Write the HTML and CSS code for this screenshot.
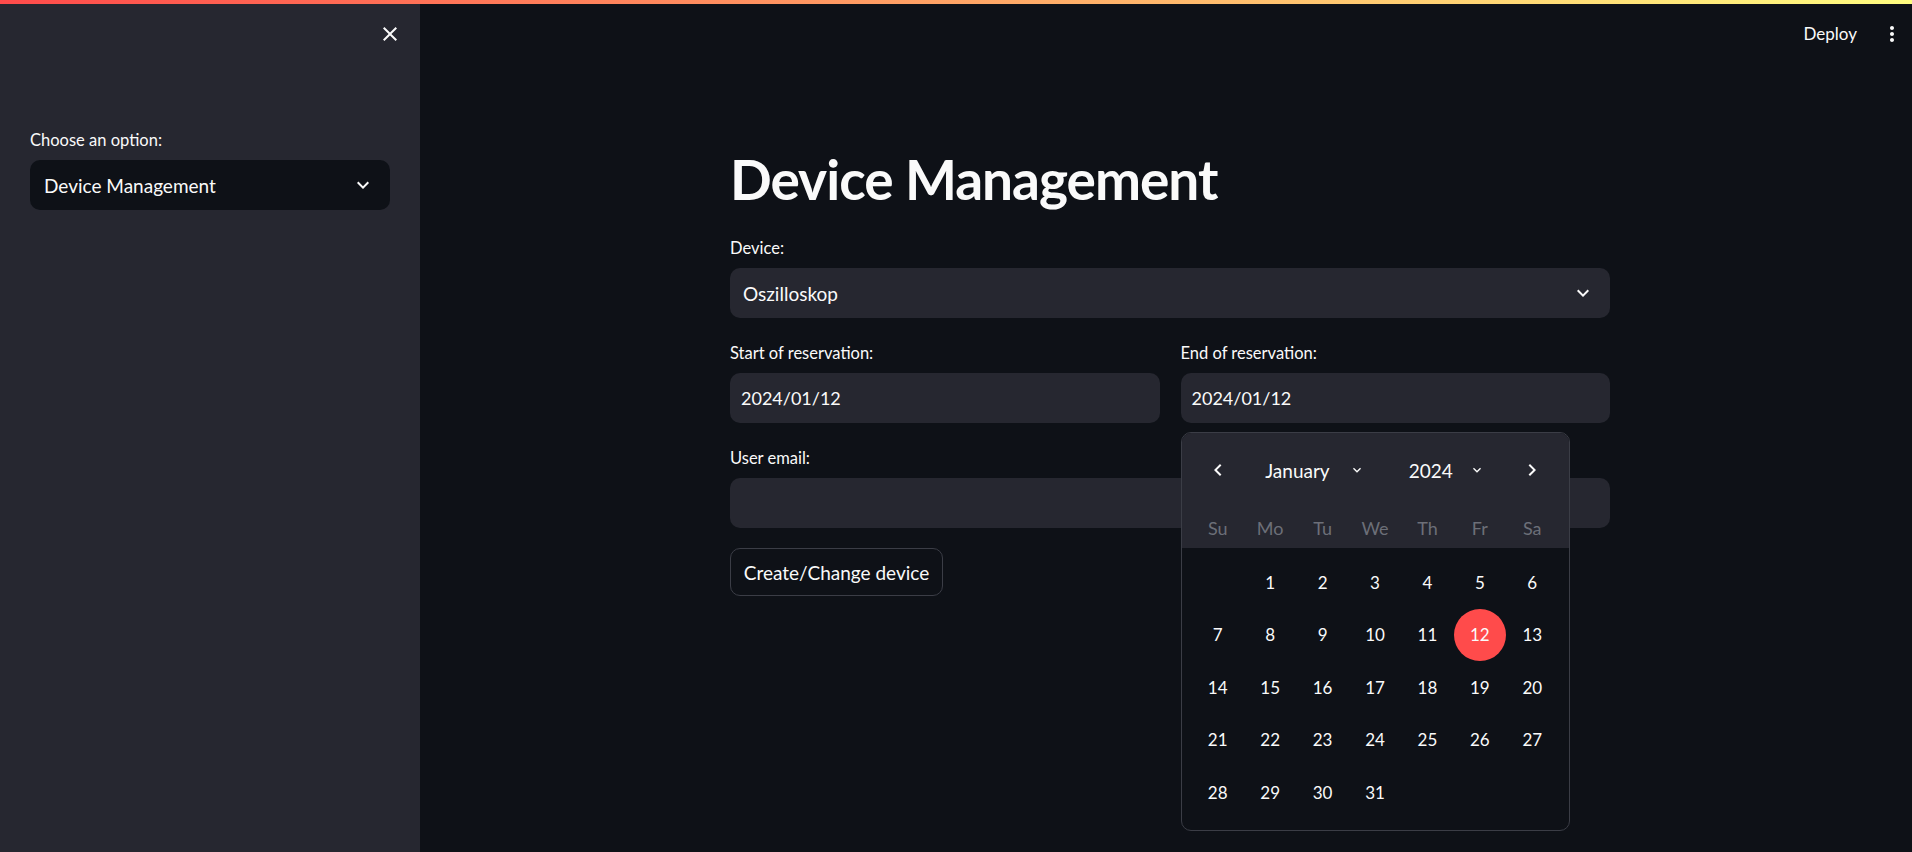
FILE: index.html
```html
<!DOCTYPE html>
<html lang="en">
<head>
<meta charset="utf-8">
<title>Device Management</title>
<link rel="stylesheet" href="styles.css">
</head>
<body>
<div class="decor"></div>
<div class="app">
  <aside class="sidebar">
    <div class="side-head">
      <svg class="ico-close" width="24" height="24" viewBox="0 0 24 24"><path fill="#fafafa" d="M19 6.41L17.59 5 12 10.59 6.41 5 5 6.41 10.59 12 5 17.59 6.41 19 12 13.41 17.59 19 19 17.59 13.41 12z"/></svg>
    </div>
    <div class="side-body">
      <div class="label">Choose an option:</div>
      <div class="select select-dark">
        <span>Device Management</span>
        <svg width="24" height="24" viewBox="0 0 24 24"><path fill="#fafafa" d="M16.59 8.59L12 13.17 7.41 8.59 6 10l6 6 6-6z"/></svg>
      </div>
    </div>
  </aside>
  <main class="main">
    <header class="top">
      <span class="deploy">Deploy</span>
      <svg width="24" height="24" viewBox="0 0 24 24"><path fill="#fafafa" d="M12 8c1.1 0 2-.9 2-2s-.9-2-2-2-2 .9-2 2 .9 2 2 2zm0 2c-1.1 0-2 .9-2 2s.9 2 2 2 2-.9 2-2-.9-2-2-2zm0 6c-1.1 0-2 .9-2 2s.9 2 2 2 2-.9 2-2-.9-2-2-2z"/></svg>
    </header>
    <section class="block">
      <h1 class="title">Device Management</h1>
      <div class="widget">
        <div class="label">Device:</div>
        <div class="select">
          <span>Oszilloskop</span>
          <svg width="24" height="24" viewBox="0 0 24 24"><path fill="#fafafa" d="M16.59 8.59L12 13.17 7.41 8.59 6 10l6 6 6-6z"/></svg>
        </div>
      </div>
      <div class="cols">
        <div class="widget">
          <div class="label">Start of reservation:</div>
          <div class="input">2024/01/12</div>
        </div>
        <div class="widget">
          <div class="label">End of reservation:</div>
          <div class="date-wrap">
            <div class="input">2024/01/12</div>
            <div class="calendar">
              <div class="cal-head">
                <div class="cal-nav">
                  <span class="arrow"><svg width="24" height="24" viewBox="0 0 24 24"><path fill="#fafafa" d="M15.41 7.41L14 6l-6 6 6 6 1.41-1.41L10.83 12z"/></svg></span>
                  <div class="cal-sel">
                    <span class="msel">January<svg width="16" height="16" viewBox="0 0 24 24"><path fill="#fafafa" d="M16.59 8.59L12 13.17 7.41 8.59 6 10l6 6 6-6z"/></svg></span>
                    <span class="ysel">2024<svg width="16" height="16" viewBox="0 0 24 24"><path fill="#fafafa" d="M16.59 8.59L12 13.17 7.41 8.59 6 10l6 6 6-6z"/></svg></span>
                  </div>
                  <span class="arrow"><svg width="24" height="24" viewBox="0 0 24 24"><path fill="#fafafa" d="M10 6L8.59 7.41 13.17 12l-4.58 4.59L10 18l6-6z"/></svg></span>
                </div>
                <div class="weekdays">
                  <span>Su</span><span>Mo</span><span>Tu</span><span>We</span><span>Th</span><span>Fr</span><span>Sa</span>
                </div>
              </div>
              <div class="days">
                <span></span><span>1</span><span>2</span><span>3</span><span>4</span><span>5</span><span>6</span>
                <span>7</span><span>8</span><span>9</span><span>10</span><span>11</span><span class="sel">12</span><span>13</span>
                <span>14</span><span>15</span><span>16</span><span>17</span><span>18</span><span>19</span><span>20</span>
                <span>21</span><span>22</span><span>23</span><span>24</span><span>25</span><span>26</span><span>27</span>
                <span>28</span><span>29</span><span>30</span><span>31</span><span></span><span></span><span></span>
              </div>
            </div>
          </div>
        </div>
      </div>
      <div class="widget">
        <div class="label">User email:</div>
        <div class="input"></div>
      </div>
      <button class="btn">Create/Change device</button>
    </section>
  </main>
</div>
</body>
</html>
```
FILE: styles.css
```css
* { box-sizing: border-box; }
html, body { margin: 0; padding: 0; }
body {
  background: #0e1117;
  color: #fafafa;
  font-family: Lato, "Noto Sans", sans-serif;
  height: 852px;
  overflow: hidden;
}
.decor {
  height: 4px;
  background: linear-gradient(90deg, #ff4b4b, #fffd80);
}
.app {
  display: flex;
  height: 848px;
}
.sidebar {
  width: 420px;
  flex: none;
  background: #262730;
}
.side-head {
  height: 60px;
  display: flex;
  align-items: center;
  justify-content: flex-end;
  padding-right: 18px;
}
.side-body {
  padding: 65px 30px 0 30px;
}
.label {
  font-size: 16.5px;
  line-height: 22px;
  height: 22px;
  margin-bottom: 9px;
}
.select {
  height: 50px;
  border-radius: 10px;
  background: #262730;
  display: flex;
  align-items: center;
  justify-content: space-between;
  padding: 0 15px 0 13px;
  font-size: 19px;
}
.select-dark {
  background: #0e1117;
  padding-left: 14px;
}
.main {
  flex: 1;
  display: flex;
  flex-direction: column;
}
.top {
  height: 59px;
  display: flex;
  align-items: center;
  justify-content: flex-end;
  gap: 23px;
  padding-right: 8px;
}
.deploy {
  font-size: 17px;
}
.block {
  width: 880px;
  margin-left: 310px;
  padding-top: 83px;
  display: flex;
  flex-direction: column;
}
.title {
  margin: 0 0 25px 0;
  font-size: 55px;
  line-height: 66px;
  font-weight: 700;
  letter-spacing: -1px;
}
.widget {
  margin-bottom: 24px;
}
.cols {
  display: grid;
  grid-template-columns: 1fr 1fr;
  gap: 21px;
}
.input {
  height: 50px;
  border-radius: 10px;
  background: #262730;
  display: flex;
  align-items: center;
  padding: 0 11px;
  font-size: 18px;
}
.date-wrap {
  position: relative;
}
.calendar {
  position: absolute;
  left: 0;
  top: 59px;
  width: 389px;
  border: 1px solid #3b3d46;
  border-radius: 10px;
  overflow: hidden;
  background: #0e1117;
  z-index: 5;
}
.cal-head {
  background: #262730;
  padding: 11px 10px 0 10px;
}
.cal-nav {
  height: 52px;
  display: flex;
  align-items: center;
  justify-content: space-between;
  margin-bottom: 12px;
}
.arrow {
  width: 52px;
  display: flex;
  justify-content: center;
}
.cal-sel {
  display: flex;
  align-items: center;
  font-size: 19px;
}
.msel, .ysel {
  display: flex;
  align-items: center;
}
.msel svg { margin-left: 19px; }
.ysel { margin-left: 44px; }
.ysel svg { margin-left: 16px; }
.weekdays {
  height: 40px;
  display: grid;
  grid-template-columns: repeat(7, 1fr);
  align-items: center;
  text-align: center;
  color: #6c6f78;
  font-size: 18px;
}
.days {
  display: grid;
  grid-template-columns: repeat(7, 1fr);
  grid-auto-rows: 52.5px;
  padding: 8px 10px 11px 10px;
  font-size: 17px;
}
.days span {
  display: flex;
  align-items: center;
  justify-content: center;
}
.days .sel {
  width: 52px;
  height: 52px;
  border-radius: 50%;
  background: #ff4b4b;
  justify-self: center;
}
.btn {
  align-self: flex-start;
  margin-top: -4px;
  height: 48px;
  width: 213px;
  border: 1px solid #3b3d46;
  border-radius: 10px;
  background: #0e1117;
  color: #fafafa;
  font-family: inherit;
  font-size: 19px;
  padding: 0;
}
```
